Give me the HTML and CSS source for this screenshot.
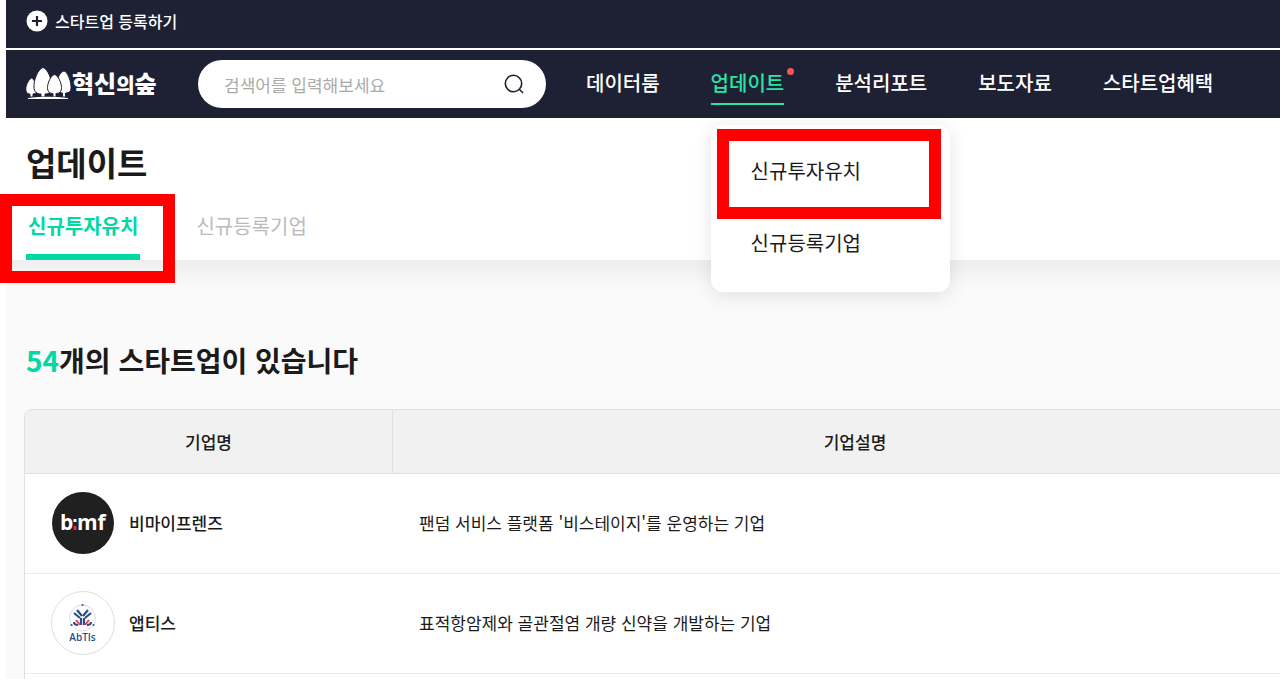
FILE: index.html
```html
<!DOCTYPE html>
<html lang="ko">
<head>
  <meta charset="utf-8">
  <title>혁신의숲 - 업데이트</title>
  <meta name="viewport" content="width=device-width, initial-scale=1.0">
  <link rel="stylesheet" href="styles.css">
</head>
<body>
  <div class="top-bar">
    <a class="register" href="#">
      <svg width="22" height="22" viewBox="0 0 22 22" aria-hidden="true">
        <circle cx="11" cy="11" r="10.5" fill="#fff"/>
        <path d="M11 6v10M6 11h10" stroke="#1e2033" stroke-width="2.2"/>
      </svg>
      스타트업 등록하기
    </a>
  </div>

  <header class="header">
    <a class="logo" href="#">
      <svg width="46" height="34" viewBox="0 0 46 34" fill="#fff" stroke="#1e2033" stroke-width="1" aria-hidden="true">
        <path d="M5.500 11C2 13-1 20 0 24c1 3 3 3 4 3v3h3v-3c3 0 4-2 4-5 0-4-3-10-5.500-11z"/>
        <path d="M38 4c-4 1-7 7-7 14 0 5 2 8 5.500 8v4h3v-4c4 0 6-2 5.500-7C44.500 12 41 4.500 38 4z"/>
        <path d="M17 0.500C12 2 7.500 13 8 20c0 5 3 7 7 7v3h4v-3c4 0 7-2 7-7C26 13 22 2 17 .5z"/>
        <path d="M28.500 7.500c-4 1-7 9-7 13 0 4 2 6 5.500 6V30h3v-3.500c3.500 0 5.500-2 5.500-6 0-4-3-12-7-13z"/>
        <path d="M2 31q19-2.500 40 0v1H2z" stroke="none"/>
      </svg>
      <span class="logo-text">혁신<small>의</small>숲</span>
    </a>

    <form class="search">
      <input type="text" aria-label="검색어" placeholder="검색어를 입력해보세요">
      <button type="button" aria-label="검색">
        <svg width="22" height="22" viewBox="0 0 22 22" fill="none" stroke="#1e2033" stroke-width="1.6" aria-hidden="true">
          <circle cx="10.5" cy="10.5" r="8.2"/>
          <path d="M16.5 16.5L20 20"/>
        </svg>
      </button>
    </form>

    <nav class="nav">
      <a href="#">데이터룸</a>
      <div class="nav-item">
        <a class="active" href="#">업데이트</a>
        <span class="dot"></span>
        <div class="menu">
          <a class="marked" href="#">신규투자유치</a>
          <a href="#">신규등록기업</a>
        </div>
      </div>
      <a href="#">분석리포트</a>
      <a href="#">보도자료</a>
      <a href="#">스타트업혜택</a>
    </nav>
  </header>

  <section class="page-head">
    <h1>업데이트</h1>
    <div class="tabs">
      <a class="tab selected marked" href="#">신규투자유치</a>
      <a class="tab" href="#">신규등록기업</a>
    </div>
  </section>

  <main class="content">
    <h2><em>54</em>개의 스타트업이 있습니다</h2>
    <table class="companies">
      <thead>
        <tr>
          <th class="col-name">기업명</th>
          <th>기업설명</th>
        </tr>
      </thead>
      <tbody>
        <tr>
          <td>
            <div class="company">
              <svg width="64" height="64" viewBox="0 0 64 64" aria-hidden="true">
                <circle cx="32" cy="32" r="31" fill="#202020"/>
                <text class="bmf" x="9" y="39">b</text>
                <text class="bmf" x="26" y="39">mf</text>
                <path d="M22.500 28h3v3h-3z" fill="#fff"/>
                <path d="M22.500 35h3v4h-3z" fill="#f2273f"/>
              </svg>
              비마이프렌즈
            </div>
          </td>
          <td>팬덤 서비스 플랫폼 '비스테이지'를 운영하는 기업</td>
        </tr>
        <tr>
          <td>
            <div class="company">
              <svg width="64" height="64" viewBox="0 0 64 64" aria-hidden="true">
                <circle cx="32" cy="32" r="31.5" fill="#fff" stroke="#dedede"/>
                <circle cx="31.500" cy="27" r="13" fill="none" stroke="#d5dcea"/>
                <circle cx="31.500" cy="14" r="1" fill="#2b4c8c"/>
                <circle cx="20.500" cy="34" r="1" fill="#2b4c8c"/>
                <circle cx="42.500" cy="34" r="1" fill="#2b4c8c"/>
                <g fill="none" stroke="#2b4c8c" stroke-width="2.2">
                  <path d="M23 22l6 5M26 19l5 6M40 22l-6 5M37 19l-5 6"/>
                  <path d="M30 27v7M33 27v7M23 31q0 3 4 3M40 31q0 3-4 3"/>
                </g>
                <path d="M25 29l4 5M38 29l-4 5" stroke="#e23b4a" stroke-width="2"/>
                <text class="abtis" x="31.500" y="50">AbTIs</text>
              </svg>
              앱티스
            </div>
          </td>
          <td>표적항암제와 골관절염 개량 신약을 개발하는 기업</td>
        </tr>
        <tr>
          <td></td>
          <td></td>
        </tr>
      </tbody>
    </table>
  </main>
</body>
</html>
```
FILE: styles.css
```css
* {
  box-sizing: border-box;
}

body {
  margin: 0;
  padding-left: 6px;
  height: 100vh;
  overflow: hidden;
  font-family: "Noto Sans CJK KR", "Noto Sans", sans-serif;
  color: #1b1b1b;
  background: #fff;
}

a {
  color: inherit;
  text-decoration: none;
}

.top-bar {
  height: 48px;
  padding: 0 20px;
  background: #1e2033;
  color: #fff;
}

.register {
  display: inline-flex;
  align-items: center;
  gap: 7px;
  height: 42px;
  font-size: 16px;
  font-weight: 500;
}

.header {
  display: flex;
  align-items: center;
  height: 68px;
  margin-top: 2px;
  padding: 0 20px;
  background: #1e2033;
  color: #fff;
}

.logo {
  display: flex;
  align-items: center;
  width: 172px;
  flex-shrink: 0;
}

.logo-text {
  font-size: 24px;
  font-weight: 900;
  line-height: 34px;
}

.logo-text small {
  font-size: 20px;
}

.search {
  display: flex;
  align-items: center;
  flex-shrink: 0;
  width: 348px;
  height: 48px;
  margin-right: 40px;
  padding: 0 21px 0 26px;
  border-radius: 24px;
  background: #fff;
}

.search input {
  flex: 1;
  min-width: 0;
  padding: 0;
  border: 0;
  outline: 0;
  font: 17px "Noto Sans CJK KR", sans-serif;
}

.search input::placeholder {
  color: #aaa;
}

.search button {
  display: flex;
  padding: 0;
  border: 0;
  background: none;
  cursor: pointer;
}

.nav {
  display: flex;
  gap: 51px;
  font-size: 20px;
  font-weight: 500;
  line-height: 40px;
  white-space: nowrap;
}

.nav-item {
  position: relative;
}

.nav .active {
  display: block;
  border-bottom: 2px solid #2be3a5;
  color: #2be3a5;
}

.dot {
  position: absolute;
  top: 5px;
  right: -10px;
  width: 7px;
  height: 7px;
  border-radius: 50%;
  background: #f55656;
}

.menu {
  position: absolute;
  z-index: 2;
  top: 62px;
  left: 0;
  width: 239px;
  padding: 10px 12px 13px 6px;
  border-radius: 12px;
  background: #fff;
  box-shadow: 0 4px 20px rgba(0, 0, 0, .1);
  color: #1b1b1b;
  font-weight: 400;
}

.menu a {
  display: block;
  padding: 16px 34px;
}

/* red frame round the highlighted entries */
.marked {
  position: relative;
}

.marked::after {
  content: "";
  position: absolute;
  z-index: 3;
  inset: -6px -3px -12px 0;
  border: 12px solid #f00;
}

.page-head {
  padding: 20px 20px 0;
  background: #fff;
}

h1 {
  margin: 0;
  font-size: 33px;
  font-weight: 700;
  line-height: 48px;
}

.tabs {
  display: flex;
  gap: 54px;
  margin-top: 20px;
}

.tab {
  padding: 0 2px 8px;
  color: #bbb;
  font-size: 20px;
  line-height: 40px;
}

.tab.selected {
  border-bottom: 6px solid #00d9a3;
  color: #00d9a3;
  font-weight: 700;
}

.tab.marked::after {
  inset: -12px -35px -29px -26px;
}

.content {
  min-height: 100%;
  padding: 76px 0 0 18px;
  background: linear-gradient(#eee, #fafafa 28px);
}

h2 {
  margin: 0 0 25px;
  padding-left: 2px;
  font-size: 28px;
  font-weight: 700;
  line-height: 48px;
}

h2 em {
  color: #00d9a3;
  font-style: normal;
}

/* runs on past the right edge of the window */
.companies {
  width: calc(100% + 38px);
  border: 1px solid #e0e0e0;
  border-radius: 8px 0 0 0;
  border-spacing: 0;
  overflow: hidden;
  table-layout: fixed;
  background: #fff;
  font-size: 17px;
}

.companies th {
  height: 64px;
  padding: 0;
  border-bottom: 1px solid #e0e0e0;
  background: #f1f1f1;
  font-weight: 500;
}

.companies .col-name {
  width: 368px;
  border-right: 1px solid #e0e0e0;
}

.companies td {
  height: 100px;
  padding: 0 26px 2px;
  border-bottom: 1px solid #ebebeb;
}

.company {
  display: flex;
  align-items: center;
  gap: 14px;
  font-weight: 500;
}

.bmf {
  fill: #fff;
  font: 700 21px "Open Sans", sans-serif;
}

.abtis {
  fill: #2b4c8c;
  font: 600 10px "Open Sans", sans-serif;
  text-anchor: middle;
}
```
